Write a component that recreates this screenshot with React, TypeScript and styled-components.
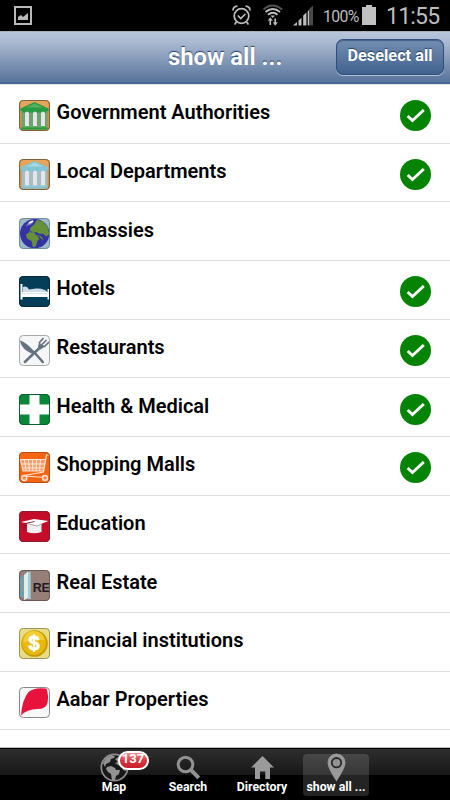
import React from "react"
import styled, { createGlobalStyle } from "styled-components"

type IconName =
  | "government"
  | "local"
  | "embassy"
  | "hotel"
  | "restaurant"
  | "health"
  | "shopping"
  | "education"
  | "estate"
  | "finance"
  | "aabar"

interface Category {
  label: string
  icon: IconName
  checked?: boolean
}

const categories: Category[] = [
  { label: "Government Authorities", icon: "government", checked: true },
  { label: "Local Departments", icon: "local", checked: true },
  { label: "Embassies", icon: "embassy" },
  { label: "Hotels", icon: "hotel", checked: true },
  { label: "Restaurants", icon: "restaurant", checked: true },
  { label: "Health & Medical", icon: "health", checked: true },
  { label: "Shopping Malls", icon: "shopping", checked: true },
  { label: "Education", icon: "education" },
  { label: "Real Estate", icon: "estate" },
  { label: "Financial institutions", icon: "finance" },
  { label: "Aabar Properties", icon: "aabar" },
]

const Temple = ({ main, light, wall }: { main: string; light: string; wall: string }) => (
  <>
    <rect width="31" height="31" fill="#cf9145" />
    <rect x="1.5" y="1" width="28" height="8" fill="#e5a65c" />
    <rect x="2.5" y="10" width="26" height="19.5" fill={wall} />
    <path d="M1.5 8.5 15.5 2 29.5 8.5V11H1.5Z" fill={main} />
    <path d="M7 7.5 15.5 3.5 24 7.5Z" fill={light} />
    <rect x="3.5" y="10.5" width="24" height="2" fill={main} />
    <rect x="2.5" y="27.5" width="26" height="2" fill={main} />
    <path d="M6 13q2-3 4 0v13H6zM14 13q2-3 4 0v13h-4zM22 13q2-3 4 0v13h-4z" fill="#e6e3ee" />
    <path d="M5.5 26.5h5M13.5 26.5h5M21.5 26.5h5" stroke={light} />
  </>
)

const art: Record<IconName, React.ReactNode> = {
  government: <Temple main="#299b43" light="#55b062" wall="#6aa56a" />,
  local: <Temple main="#83c4d5" light="#a3d8e4" wall="#a3bfbf" />,
  embassy: (
    <>
      <rect width="31" height="31" fill="#9dbac9" />
      <circle cx="15.7" cy="15.6" r="14.7" fill="#3532a3" />
      <path d="M15 6.5 18 2l6 1.500 5 6 1 7-3 2-3-3-3 .5-4-2-3 1-2-2-1.500 1 1-4.500Z" fill="#669039" />
      <path d="m7 16.500 3.500-2.500 5 1 3 3.500 2 2-2.500 3-1 4.500-3 1.500-1.500-6.500-4.500-2.500Z" fill="#669039" />
      <path d="M11 11.500 14 9l3 1-2 2.500-3 .5Z" fill="#669039" />
      <path d="m18.500 17 4 1.500 2 3.500-2-1-2-2.500-3-1Z" fill="#669039" />
      <path d="M7 8Q9 3 15 2.500L13 6 9 7.500Z" fill="#7f80cf" />
      <path d="M10 5 14 3" stroke="#fff" strokeWidth="1.6" />
    </>
  ),
  hotel: (
    <>
      <rect width="31" height="31" fill="#053e59" />
      <path d="M4 11Q8 9.500 10 13.500L17 12.500Q25 12 28.500 16V17H4Z" fill="#cddce5" />
      <path d="M1.500 8h2v8H28.500V13h1.500v10.500h-1.500V21H3.500v2.500h-2Z" fill="#fff" />
      <path d="M3.500 17.500H28" stroke="#d8e5ea" />
    </>
  ),
  restaurant: (
    <>
      <rect width="31" height="31" fill="#f5f6f7" />
      <path d="M1 5.500Q5 6 12 13L17 18 14.500 19.500 8 16Q2 12 1 5.500Z" fill="#657380" />
      <path d="m15 17 8.800 10M5.800 27 21 12.500" stroke="#657380" strokeWidth="2.500" strokeLinecap="round" />
      <path d="M20 8 24.500 3M23 9.500 27.500 5M25 12 30 7" fill="none" stroke="#657380" strokeWidth="1.700" />
      <path d="M19 12 20 7.500 23 9.500 26 11.500 21.500 14.500Z" fill="#657380" />
    </>
  ),
  health: (
    <>
      <rect width="31" height="31" fill="#088838" />
      <path d="M10.500 1h10v9.500H30v10h-9.500V30h-10v-9.500H1v-10h9.500Z" fill="#fff" />
    </>
  ),
  shopping: (
    <>
      <rect width="31" height="31" fill="#f66612" />
      <path d="M1.500 7.500 4 19h21l2-12Z" fill="#f79b67" />
      <path
        d="M30 3h-2.500L24.500 20 5 23.500M1.500 7.500h25.200M1.500 7.500 4 19h20.500M3 12h23M4 16h21M5.500 8l1.700 11M9.500 8l1 11M13.500 8l.4 11M17.500 8l-.4 11M21.500 8l-1 11M5 24l22 1.500"
        fill="none"
        stroke="#ffe5d5"
        strokeWidth="1.15"
      />
      <circle cx="5.300" cy="26" r="2.500" fill="#f68444" stroke="#ffe5d5" strokeWidth="1.400" />
      <circle cx="26" cy="26" r="2.500" fill="#f68444" stroke="#ffe5d5" strokeWidth="1.400" />
    </>
  ),
  education: (
    <>
      <rect width="31" height="31" fill="#c30d29" />
      <path d="M8 12v9q7 2.500 14.500 0v-9Z" fill="#f0f0f0" />
      <path d="M2 11 15 8 29.500 10 18 14.500Z" fill="#fff" />
      <path d="m8 12.500 10 2.500 5-2" fill="none" stroke="#b5a5a8" />
      <path d="M15.500 10.500 6 12.500 4.500 19" fill="none" stroke="#712331" strokeWidth=".9" />
    </>
  ),
  estate: (
    <>
      <rect width="31" height="31" fill="#967f79" />
      <path d="M1 8 5 5v22H1Z" fill="#68a2b1" />
      <path d="M5 5 9 1.500V28L5 30Z" fill="#e3ece9" />
      <path d="m9 2 2.700-.5V29H9Z" fill="#9bd0da" />
      <path d="M1 13 5 9M1 18l4-4M1 23l4-4" stroke="#bb8d6d" strokeWidth=".8" />
      <text
        x="13.800"
        y="21.500"
        fontFamily="Liberation Sans, sans-serif"
        fontSize="12.500"
        fontWeight="700"
        textLength="17"
        fill="#201b1d"
      >
        RE
      </text>
    </>
  ),
  finance: (
    <>
      <rect width="31" height="31" fill="#e9dd83" />
      <circle cx="15.500" cy="15.500" r="13.300" fill="#c79b07" />
      <circle cx="15" cy="15" r="12" fill="#e8b909" />
      <path d="M4.500 15a10.500 10.500 0 0 1 21-3Q14 10 4.500 15Z" fill="#f2ce36" />
      <text
        x="15"
        y="22.300"
        textAnchor="middle"
        fontFamily="Liberation Sans, sans-serif"
        fontSize="20"
        fontWeight="700"
        fill="#fff"
        stroke="#fff"
        strokeWidth=".8"
      >
        $
      </text>
    </>
  ),
  aabar: (
    <>
      <rect width="31" height="31" fill="#f8f8f8" />
      <path d="M2 28.500Q3 13 9.500 5 15 0 27.500 1.500 30 9 28.500 16 27 22 18 22 8 22 2 28.500Z" fill="#e7133c" />
    </>
  ),
}

const borders: Record<IconName, string> = {
  government: "#806341",
  local: "#806341",
  embassy: "#718d99",
  hotel: "#102936",
  restaurant: "#a5aaad",
  health: "#09602a",
  shopping: "#b84e1a",
  education: "#861f30",
  estate: "#6c5854",
  finance: "#9c965e",
  aabar: "#888",
}

const CategoryIcon = ({ name }: { name: IconName }) => (
  <IconBox viewBox="0 0 31 31">
    <clipPath id={`tile-${name}`}>
      <rect width="31" height="31" rx="4.200" />
    </clipPath>
    <g clipPath={`url(#tile-${name})`}>{art[name]}</g>
    <rect x=".5" y=".5" width="30" height="30" rx="3.800" fill="none" stroke={borders[name]} />
  </IconBox>
)

const Check = () => (
  <IconBox viewBox="0 0 31 31">
    <circle cx="15.500" cy="15.500" r="15.500" fill="#048304" />
    <path d="m7.700 16 4.700 4.500L23.800 10" fill="none" stroke="#fff" strokeWidth="2.900" />
  </IconBox>
)

const StatusIcons = () => (
  <svg width="95" height="30" viewBox="230 0 95 30" fill="none" stroke="#bdbdbd">
    <circle cx="241.500" cy="16" r="7.300" strokeWidth="1.700" />
    <path
      d="M233 10.500q0-4 4.500-4.300M250 10.500q0-4-4.500-4.300M236.500 22l-2 2.500M246.500 22l2 2.500M237.800 15.500l3 3 4.500-4.500"
      strokeWidth="1.700"
    />
    <path d="M263.500 9.500q9-8 18.500 0" strokeWidth="2" stroke="#555" />
    <path d="M265.500 12q7.300-6 14.500 0M268 14.800q5-4 9.500 0" strokeWidth="1.900" />
    <path d="M271 15.800h3.500l-1.700 2Z" fill="#bdbdbd" strokeWidth=".5" />
    <path d="M270.300 25v-6M275.200 18.500v6" strokeWidth="1.600" />
    <path d="m268 20.500 2.300-3 2.300 3ZM273 22.500l2.300 3 2.300-3Z" fill="#bdbdbd" strokeWidth=".3" />
    <path d="M309 9 313 5.500V25.500H309Z" fill="#484848" stroke="none" />
    <path
      d="M293 25.500 297 22v3.500ZM298.500 20.500l3-2.700v7.700h-3ZM303.200 15.500l3.200-3v13h-3.200ZM307.700 11.300l1.300-1.200v15.400h-1.300Z"
      fill="#bdbdbd"
      stroke="none"
    />
  </svg>
)

const GlobeGlyph = () => (
  <svg width="29" height="29" viewBox="0 0 29 29">
    <circle cx="14.500" cy="14.500" r="13.200" fill="#181818" stroke="#8c8c8c" strokeWidth="1.700" />
    <path
      d="M3 10 6 5l5-3 4 1-1 2-3 1-1 3-4 2-1 3ZM7 14l4-1 4 2 1 2h4l-1 4-3 2-1 4h-3l-1-6-3-2-2-3ZM15 6l5-3 5 4 2 6-1 5-3-1-1-3-4-2-3-2 3-1Z"
      fill="#929292"
    />
  </svg>
)

const SearchGlyph = () => (
  <svg width="25" height="25" viewBox="0 0 25 25" fill="none" stroke="#929292">
    <circle cx="9.500" cy="9.500" r="7.300" strokeWidth="3" />
    <path d="m14.800 14.800 8 8" strokeWidth="4" />
  </svg>
)

const HomeGlyph = () => (
  <svg width="23" height="23" viewBox="0 0 23 23">
    <path d="M11.500 0 23 11.500h-4V23h-4.700v-7.500H9V23H4V11.500H0Z" fill="#9a9a9a" />
  </svg>
)

const PinGlyph = () => (
  <svg width="19" height="29" viewBox="0 0 19 29">
    <path d="M9.500.5A9 9 0 0 0 .5 9.500Q.5 15 9.500 28.500 18.500 15 18.500 9.500A9 9 0 0 0 9.500.5Z" fill="#999" />
    <circle cx="9.500" cy="9.700" r="4.700" fill="#929292" stroke="#292929" strokeWidth="1.800" />
  </svg>
)

const App: React.FC = () => (
  <Screen>
    <GlobalStyle />
    <StatusBar>
      <svg width="19" height="20" viewBox="0 0 19 20">
        <rect x="1" y="1" width="16" height="17" fill="none" stroke="#b9b9b9" strokeWidth="2" />
        <path d="M4 14v-3l3-2 2 2 5-4v7Z" fill="#b9b9b9" />
      </svg>
      <StatusRight>
        <StatusIcons />
        <Percent>100%</Percent>
        <svg width="14" height="20" viewBox="0 0 14 20">
          <path d="M4 0h6v2h4v18H0V2h4Z" fill="#c1c1c1" />
        </svg>
        <Clock>11:55</Clock>
      </StatusRight>
    </StatusBar>
    <Header>
      <Title>show all ...</Title>
      <DeselectButton>Deselect all</DeselectButton>
    </Header>
    <List>
      {categories.map(({ label, icon, checked }) => (
        <Row key={label}>
          <CategoryIcon name={icon} />
          <RowLabel>{label}</RowLabel>
          {checked && <Check />}
        </Row>
      ))}
    </List>
    <TabBar>
      <Tab>
        <Glyph>
          <GlobeGlyph />
        </Glyph>
        <TabLabel>Map</TabLabel>
        <Badge>137</Badge>
      </Tab>
      <Tab>
        <Glyph>
          <SearchGlyph />
        </Glyph>
        <TabLabel>Search</TabLabel>
      </Tab>
      <Tab>
        <Glyph>
          <HomeGlyph />
        </Glyph>
        <TabLabel>Directory</TabLabel>
      </Tab>
      <Tab $active>
        <Glyph>
          <PinGlyph />
        </Glyph>
        <TabLabel>show all ...</TabLabel>
      </Tab>
    </TabBar>
  </Screen>
)
export default App

const GlobalStyle = createGlobalStyle`
  * {
    box-sizing: border-box;
  }

  body {
    background: #fff;
    font-family: Roboto, "Liberation Sans", sans-serif;
    margin: 0;
  }
`

const Screen = styled.div`
  display: flex;
  flex-direction: column;
  height: 800px;
  overflow: hidden;
  width: 450px;
`

const StatusBar = styled.div`
  background: #000;
  color: #bdbdbd;
  display: flex;
  flex: none;
  height: 31px;
  justify-content: space-between;
  padding: 6px 10px 0 14px;
`

const StatusRight = styled.div`
  display: flex;

  > svg {
    flex: none;
  }

  > svg:first-child {
    margin-top: -6px;
  }

  > svg:nth-child(3) {
    margin-top: -1px;
  }
`

const Percent = styled.div`
  font-size: 15.8px;
  letter-spacing: -0.6px;
  line-height: 21px;
  margin-left: -2px;
  width: 39px;
`

const Clock = styled.div`
  font-size: 23px;
  letter-spacing: -0.8px;
  line-height: 21px;
  margin-left: 10px;
  width: 54px;
`

const Header = styled.header`
  align-items: start;
  background: linear-gradient(#b7c6d8, #aab9d1 20%, #5d789f 94%);
  border-bottom: 2px solid #456793;
  border-top: 1px solid #a7b1b9;
  color: #fff;
  display: grid;
  flex: none;
  grid-template-columns: 1fr 114px 1fr;
  height: 53px;
  padding: 7px 6px 0;
  text-shadow: 0 -1px 1px #263e60;
`

const Title = styled.div`
  font-size: 23.8px;
  font-weight: 700;
  grid-column: 2;
  line-height: 36px;
  white-space: nowrap;
`

const DeselectButton = styled.button`
  background: linear-gradient(#748eb1, #40628f);
  border: 1px solid #304f7b;
  border-radius: 7px;
  box-shadow: 0 1px 0 #b0c0d4, inset 0 1px 1px #42618b;
  color: inherit;
  font-family: inherit;
  font-size: 16.3px;
  font-weight: 700;
  height: 36px;
  justify-self: end;
  line-height: 32px;
  padding: 0 0 2px;
  text-shadow: inherit;
  white-space: nowrap;
  width: 108px;
`

const List = styled.main`
  background: #fff;
  border-top: 1px solid #e4e4e4;
  flex: 1;
  min-height: 0;
`

const Row = styled.div`
  align-items: flex-start;
  border-bottom: 1px solid #dedede;
  display: flex;
  height: 58.68px;
  padding: 15.2px 18.7px 0 19px;
`

const IconBox = styled.svg`
  flex: none;
  height: 31px;
  width: 31px;
`

const RowLabel = styled.div`
  color: #000;
  flex: 1;
  font-size: 20px;
  font-weight: 600;
  line-height: 24px;
  padding-left: 6.5px;
  white-space: nowrap;
`

const TabBar = styled.nav`
  background: linear-gradient(#2e2e2e, #171717 26px, #000 26px);
  border-top: 1px solid #000;
  box-shadow: 0 -1px 0 #bbb;
  display: flex;
  flex: none;
  gap: 8px;
  height: 52px;
  justify-content: center;
  padding-top: 5px;
  position: relative;
`

const Tab = styled.div<{ $active?: boolean }>`
  align-items: center;
  background: ${({ $active }) => ($active ? "rgba(255, 255, 255, 0.14)" : "none")};
  border-radius: 4px;
  display: flex;
  flex-direction: column;
  height: 42px;
  position: relative;
  width: 66px;
`

const Glyph = styled.div`
  align-items: center;
  display: flex;
  height: 29px;
  justify-content: center;
  margin-top: -1px;
`

const TabLabel = styled.div`
  color: #fff;
  font-size: 12.3px;
  font-weight: 700;
  line-height: 16px;
  margin-top: -3px;
  white-space: nowrap;
`

const Badge = styled.div`
  background: linear-gradient(#ee9295, #d63842 50%, #c91d2a);
  border: 2px solid #fff;
  border-radius: 10px;
  color: #fff;
  font-size: 13px;
  font-weight: 700;
  height: 19px;
  left: 36.5px;
  line-height: 12px;
  position: absolute;
  text-align: center;
  top: -3px;
  width: 31px;
`
